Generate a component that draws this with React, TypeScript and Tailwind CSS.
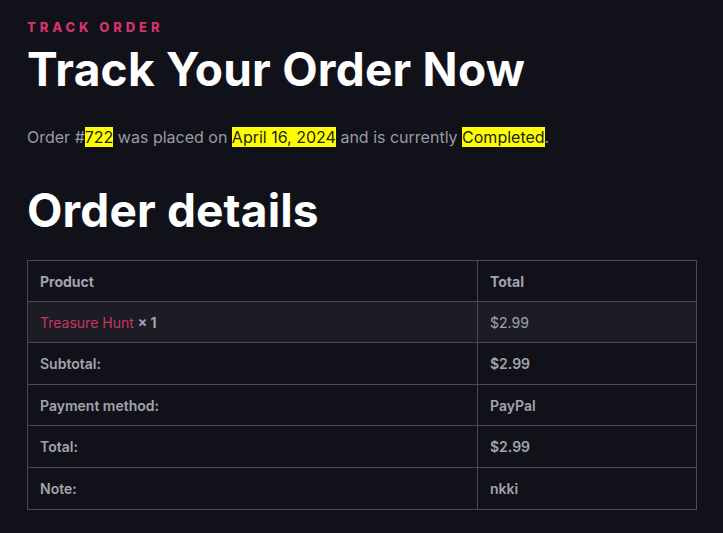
export default function App() {
  const rows: [string, string, string][] = [
    ["Subtotal:", "$2.99", "h-[42px]"],
    ["Payment method:", "PayPal", "h-[41px]"],
    ["Total:", "$2.99", "h-[42px]"],
    ["Note:", "nkki", "h-[42px]"],
  ];

  return (
    <div className="min-h-[533px] bg-[#11111a] px-[27px] pt-[20px] font-['Inter',sans-serif]">
      <p className="text-[13px] font-extrabold uppercase leading-[14px] tracking-[0.3em] text-[#d6336c]">
        Track order
      </p>
      <h1 className="mt-[7px] text-[46px] font-bold leading-[56px] tracking-[0.005em] text-white">
        Track Your Order Now
      </h1>
      <p className="mt-[28px] text-[16px] leading-[24px] text-[#9a9aa6]">
        Order #<mark className="bg-[#ffff00] text-[#222]">722</mark> was placed on{" "}
        <mark className="bg-[#ffff00] text-[#222]">April 16, 2024</mark> and is currently{" "}
        <mark className="bg-[#ffff00] text-[#222]">Completed</mark>.
      </p>
      <h2 className="mt-[33px] text-[46px] font-bold leading-[56px] tracking-[0.003em] text-white">
        Order details
      </h2>
      <table className="mt-[22px] w-[670px] border-collapse text-[14px] text-[#a3a3ad]">
        <thead>
          <tr className="h-[41px]">
            <th className="w-[450px] border border-[#4a4a55] px-3 text-left font-bold">Product</th>
            <th className="border border-[#4a4a55] px-3 text-left font-bold">Total</th>
          </tr>
        </thead>
        <tbody>
          <tr className="h-[41px] bg-[#1c1c25]">
            <td className="border border-[#4a4a55] px-3">
              <span className="text-[#c9355f]">Treasure Hunt</span>{" "}
              <strong className="font-bold">× 1</strong>
            </td>
            <td className="border border-[#4a4a55] px-3">$2.99</td>
          </tr>
          {rows.map(([label, value, h]) => (
            <tr key={label} className={h}>
              <th className="border border-[#4a4a55] px-3 text-left font-semibold">{label}</th>
              <td className="border border-[#4a4a55] px-3 font-semibold">{value}</td>
            </tr>
          ))}
        </tbody>
      </table>
    </div>
  );
}
